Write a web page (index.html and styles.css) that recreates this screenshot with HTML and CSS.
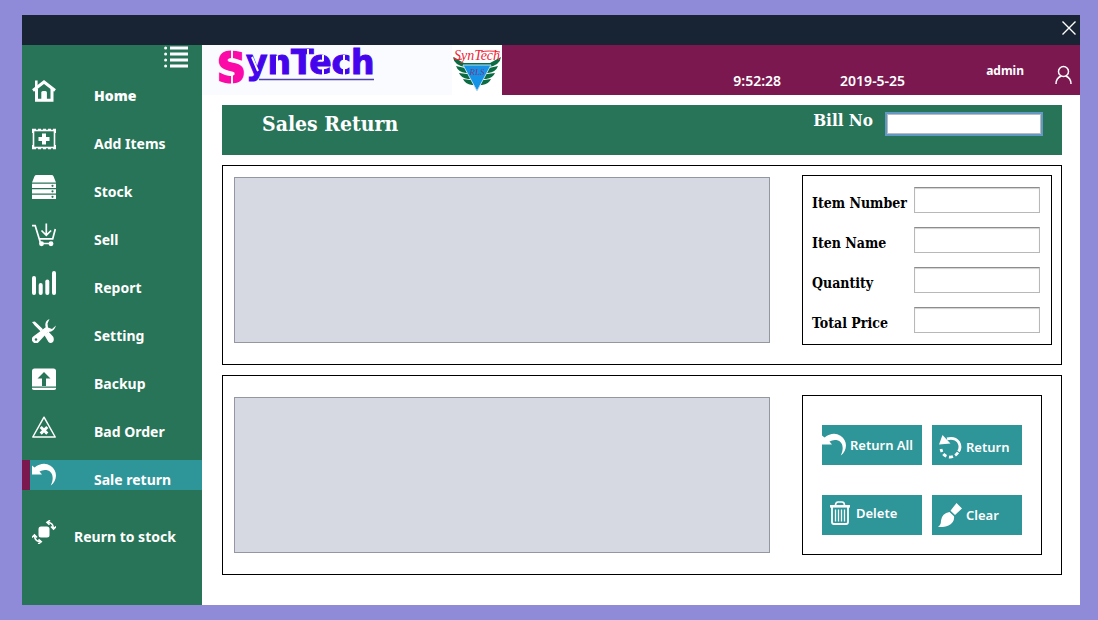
FILE: index.html
```html
<!DOCTYPE html>
<html lang="en">
<head>
    <meta charset="UTF-8">
    <meta name="viewport" content="width=device-width, initial-scale=1.0">
    <title>Sales Return</title>
    <link rel="stylesheet" href="styles.css">
</head>
<body>
    <div class="window">
        <div class="titlebar">
            <button type="button" class="icon-btn" aria-label="Close">
                <svg width="14" height="14" viewBox="0 0 14 14" fill="none" stroke="#fff" stroke-width="1.4"><path d="M.5.5l13 13M13.5.5l-13 13"/></svg>
            </button>
        </div>

        <div class="layout">
            <nav class="sidebar">
                <button type="button" class="icon-btn menu-btn" aria-label="Menu">
                    <svg width="24" height="24" viewBox="0 0 24 24" fill="#fff"><path d="M6 1.5h18v3H6zM6 7.500h18v3H6zM6 13.500h18v3H6zM6 19.500h18v3H6z"/><circle cx="1.600" cy="3" r="1.500"/><circle cx="1.600" cy="9" r="1.500"/><circle cx="1.600" cy="15" r="1.500"/><circle cx="1.600" cy="21" r="1.500"/></svg>
                </button>
                <a href="#" class="nav-item nav-home">
                    <svg viewBox="0 0 24 24" fill="none" stroke="#fff"><path d="M1 11.500L12 3l11 8.500" stroke-width="3"/><path d="M4.500 10v11.300h15.500V10" stroke-width="3"/><path d="M4.300 9V1.500" stroke-width="2.600"/><path d="M9.300 21v-7.500q0-1.500 1.500-1.500h2.600q1.500 0 1.500 1.500V21z" fill="#fff" stroke="none"/></svg>
                    <span>Home</span>
                </a>
                <a href="#" class="nav-item">
                    <svg viewBox="0 0 24 24" fill="none" stroke="#fff"><rect x="1.500" y="3.500" width="21" height="17" stroke-width="1.600"/><path d="M0 2.500h4M6 2.500h3M11 2.500h3M16 2.500h3M21 2.500h3M0 21.500h4M6 21.500h3M11 21.500h3M16 21.500h3M21 21.500h3" stroke-width="1.300"/><path d="M.7 2v4M.7 18v4M23.300 2v4M23.300 18v4" stroke-width="1.400"/><path d="M12 6.500v11M6.500 12h11" stroke-width="4"/></svg>
                    <span>Add Items</span>
                </a>
                <a href="#" class="nav-item">
                    <svg viewBox="0 0 24 24" fill="#fff"><path d="M4.500 0h15q1.500 0 2 1.200L24 7.500H0L2.500 1.200Q3 0 4.500 0zM0 8.700h24v4.200H0zM0 14.200h24v4.200H0zM0 19.700h24V24H0z"/><g fill="#277458"><circle cx="20.500" cy="10.800" r="1.100"/><circle cx="20.500" cy="16.300" r="1.100"/><circle cx="20.500" cy="21.800" r="1.100"/></g></svg>
                    <span>Stock</span>
                </a>
                <a href="#" class="nav-item">
                    <svg viewBox="0 0 24 24" fill="none" stroke="#fff" stroke-width="1.700"><path d="M0 2.700h3.200L8.500 20M7.500 15.800h13.200l2.600-9.800M9 20.500h10"/><path d="M14.300.5v11M9.500 7.500l4.800 4.800 4.800-4.800"/><circle cx="9.500" cy="20.700" r="1.600" fill="#fff"/><circle cx="19" cy="20.700" r="1.600" fill="#fff"/></svg>
                    <span>Sell</span>
                </a>
                <a href="#" class="nav-item">
                    <svg viewBox="0 0 24 24" fill="#fff"><rect y="5" width="4" height="19" rx="2"/><rect x="6.700" y="12" width="4" height="12" rx="2"/><rect x="13.300" y="8.500" width="4" height="15.500" rx="2"/><rect x="20" width="4" height="24" rx="2"/></svg>
                    <span>Report</span>
                </a>
                <a href="#" class="nav-item">
                    <svg viewBox="0 0 24 24" fill="#fff"><path d="M17.500 0Q12 2.500 13.700 8.200L1.200 17.500a3.800 3.800 0 0 0 5.300 5.700L16 13q6 .4 8-6.500L20 10l-4-1.500-.5-4z"/><path d="M0 3l2.800-.4 2.200 2 6 5.600-2.300 2.300L2.500 6.300zM12.300 16l4.100-3.500 4.800 5.300q1.300 3-.2 5.200-2.500 1.800-4.500 0z"/><circle cx="4" cy="20.500" r="1.200" fill="#277458"/></svg>
                    <span>Setting</span>
                </a>
                <a href="#" class="nav-item">
                    <svg viewBox="0 0 24 24" fill="#fff"><path d="M2.500 1.500h19Q24 1.500 24 4v15.500H0V4q0-2.500 2.500-2.500z"/><path d="M0 20.800h24v.7q0 1.500-2.500 1.500h-19Q0 23 0 21.500z"/><path d="M12 5l6.500 6.500H14v7.500h-4v-7.500H5.500z" fill="#277458"/></svg>
                    <span>Backup</span>
                </a>
                <a href="#" class="nav-item">
                    <svg viewBox="0 0 24 24" fill="none" stroke="#fff"><path d="M12 2.200L23.200 22H.8z" stroke-width="1.500" stroke-linejoin="round"/><path d="M8.700 12l6.600 6.600M15.300 12l-6.600 6.600" stroke-width="3"/></svg>
                    <span>Bad Order</span>
                </a>
                <a href="#" class="nav-item active">
                    <svg viewBox="0 0 24 24" fill="#fff"><path d="M0 2.500L2.500 4.500Q11-1.800 18.500 2.700C26 7.500 25.500 17.500 18.800 22.500 22 16 21.500 8.500 14.500 7Q10.500 6.500 7.500 8.500L10 11.500H0z"/></svg>
                    <span>Sale return</span>
                </a>
                <a href="#" class="nav-item nav-last">
                    <svg viewBox="0 0 24 24" fill="none" stroke="#fff" stroke-width="1.600"><rect x="6.500" y="6.500" width="11" height="11" rx="2.500" fill="#fff" stroke="none"/><path d="M15 2.200q6 0 6.500 6M18 .3l-3 2 2.500 2.500M19 6.500l2.500 2.500L24 6.500M9 21.800q-6 0-6.500-6M6.500 19.300l2.700 2.500-3 2.200M0 17.500L2.500 15 5 17.500"/></svg>
                    <span>Reurn to stock</span>
                </a>
            </nav>

            <main class="main">
                <header class="header">
                    <div class="brand">
                        <svg class="logo" width="170" height="50" viewBox="0 0 170 50" role="img" aria-label="SynTech">
                            <text x="-1" y="37" class="logo-s">S</text>
                            <text x="28" y="29" class="logo-rest">ynTech</text>
                            <!-- stencil cuts -->
                            <path d="M14 4v13M14 27v12M34 12l6 14M59 11v20M90 4v7M105 10v6M105 22v9M126 10v7M126 22v9" stroke="#fafbff" stroke-width="2"/>
                            <path d="M41 34.500h115" stroke="#4d45a0" stroke-width="1.500"/>
                        </svg>
                        <svg class="emblem" width="50" height="50" viewBox="0 0 50 50" role="img" aria-label="SynTech RLS">
                            <g fill="#0b6b42"><path d="M1 12l11 6h13v4H13Q2 20 1 12z"/><path d="M4 21l9 2h12v5H14Q6 27 4 21z"/><path d="M7 28l8 1h10v5h-9Q9 33 7 28z"/><path d="M11 34l7 1h7v5h-5Q13 39 11 34z"/>
                            <path d="M49 12l-11 6H25v4h12q11-2 12-10z"/><path d="M46 21l-9 2H25v5h11q8-1 10-7z"/><path d="M43 28l-8 1H25v5h9q7-1 9-6z"/><path d="M39 34l-7 1h-7v5h5q7-1 9-6z"/></g>
                            <path d="M11 20h28L25 46z" fill="#1593e6" stroke="#b9dcf0" stroke-width="1"/>
                            <text x="25" y="30" text-anchor="middle" class="emblem-inner">RLS</text>
                            <text x="25" y="15" text-anchor="middle" class="emblem-name">SynTech</text>
                            <path d="M2 13q4 3 8 1M29 7q7-2 19 0" stroke="#ed2636" fill="none"/>
                        </svg>
                    </div>
                    <div class="status">
                        <time class="clock">9:52:28</time>
                        <time class="date" datetime="2019-05-25">2019-5-25</time>
                        <span class="user">admin</span>
                        <button type="button" class="icon-btn" aria-label="Account">
                            <svg width="17" height="20" viewBox="0 0 17 20" fill="none" stroke="#fff" stroke-width="1.500"><circle cx="8.500" cy="6.500" r="5"/><path d="M1 19q0-6 5.300-8M16 19q0-6-5.300-8"/></svg>
                        </button>
                    </div>
                </header>

                <div class="content">
                    <div class="banner">
                        <h1>Sales Return</h1>
                        <label for="billNo">Bill No</label>
                        <input type="text" id="billNo" class="bill-input">
                    </div>

                    <section class="panel">
                        <div class="table-area"></div>
                        <form class="box item-form">
                            <label for="itemNumber">Item Number</label>
                            <input type="text" id="itemNumber">
                            <label for="itemName">Iten Name</label>
                            <input type="text" id="itemName">
                            <label for="quantity">Quantity</label>
                            <input type="text" id="quantity">
                            <label for="totalPrice">Total Price</label>
                            <input type="text" id="totalPrice">
                        </form>
                    </section>

                    <section class="panel panel-actions">
                        <div class="table-area"></div>
                        <div class="box actions">
                            <button type="button" class="action-btn flush">
                                <svg width="24" height="24" viewBox="0 0 24 24" fill="#fff"><path d="M0 2.500L2.500 4.500Q11-1.800 18.500 2.700C26 7.500 25.500 17.500 18.800 22.500 22 16 21.500 8.500 14.500 7Q10.500 6.500 7.500 8.500L10 11.500H0z"/></svg>
                                Return All
                            </button>
                            <button type="button" class="action-btn low">
                                <svg width="24" height="24" viewBox="0 0 24 24" fill="none" stroke="#fff" stroke-width="2.800"><path d="M9 3.800Q17 2 20.500 7q3 5 0 9.500"/><path d="M20 17.500q-3.500 5-9 4.500-6.500-1-8-8" stroke-dasharray="4 2.500"/><path d="M4.500 0L1 9.500l11.500-1z" fill="#fff" stroke="none"/></svg>
                                Return
                            </button>
                            <button type="button" class="action-btn high">
                                <svg width="24" height="24" viewBox="0 0 24 24" fill="none" stroke="#fff"><path d="M2 5.300h20" stroke-width="2.600"/><path d="M7.500 4.500Q7.500 1 10 1h4q2.500 0 2.500 3.500" stroke-width="1.600"/><path d="M4 6v15q0 2 2 2h12q2 0 2-2V6" stroke-width="1.800"/><path d="M7.500 8.500v12M10.500 8.500v12M13.500 8.500v12M16.500 8.500v12" stroke-width="1.300"/></svg>
                                Delete
                            </button>
                            <button type="button" class="action-btn">
                                <svg width="24" height="24" viewBox="0 0 24 24" fill="#fff"><path d="M18.500 0L24 5.500 17 12l-4.500-4.300z"/><path d="M11.500 9l4.500 4.200Q17 19 10.500 22.500 6 24.500 0 24q3-2 3-6.500Q4 10 11.500 9z"/></svg>
                                Clear
                            </button>
                        </div>
                    </section>
                </div>
            </main>
        </div>
    </div>
</body>
</html>
```

FILE: styles.css
```css
* {
    box-sizing: border-box;
}
body {
    font-family: "Noto Sans", "Open Sans", sans-serif;
    font-weight: 600;
    margin: 0;
    padding: 15px 18px 15px 22px;
    background-color: #8f8bd8;
    display: flex;
    min-height: 100vh;
}
.window {
    flex: 1;
    display: flex;
    flex-direction: column;
    background: white;
}
.titlebar {
    height: 30px;
    padding-right: 4px;
    background-color: #182434;
    display: flex;
    align-items: center;
    justify-content: flex-end;
}
.icon-btn {
    display: flex;
    padding: 0;
    background: none;
    border: none;
    cursor: pointer;
}
.titlebar .icon-btn {
    margin-top: -4px;
}
.layout {
    flex: 1;
    display: flex;
}

/* sidebar */
.sidebar {
    width: 180px;
    background-color: #277458;
    display: flex;
    flex-direction: column;
    gap: 18px;
}
.menu-btn {
    align-self: flex-end;
    margin: 0 14px -11px 0;
}
.nav-item {
    height: 30px;
    padding-left: 2px;
    border-left: 8px solid transparent;
    display: flex;
    align-items: center;
    gap: 38px;
    color: white;
    font-size: 14px;
    font-weight: bold;
    line-height: 20px;
    text-decoration: none;
}
.nav-item svg {
    width: 24px;
    height: 24px;
}
.nav-item span {
    align-self: flex-end;
}
.nav-home {
    font-weight: 900;
}
.nav-item.active {
    background-color: #2e9599;
    background-clip: padding-box;
    border-left-color: #7a184f;
}
.nav-last {
    gap: 18px;
    margin-top: 9px;
}

/* header */
.main {
    flex: 1;
    display: flex;
    flex-direction: column;
}
.header {
    height: 50px;
    display: flex;
    background-color: #7a184f;
}
.brand {
    width: 300px;
    background: #fafbff;
    display: flex;
    justify-content: space-between;
    padding-left: 16px;
}
.logo {
    overflow: visible;
}
.logo-s {
    font: bold 40px "DejaVu Sans", sans-serif;
    fill: #fb0aa8;
    stroke: #fb0aa8;
    stroke-width: 2px;
}
.logo-rest {
    font: bold 33px "DejaVu Sans", sans-serif;
    fill: #4505ec;
    stroke: #4505ec;
    stroke-width: 1px;
}
.emblem {
    background: white;
}
.emblem-name {
    font: italic 14px "Liberation Serif", serif;
    fill: #ed2636;
}
.emblem-inner {
    font: italic 9px "Liberation Serif", serif;
    fill: #7b3a8c;
}
.status {
    flex: 1;
    display: flex;
    justify-content: flex-end;
    padding: 16px 8px 0 0;
    color: white;
    font-size: 14px;
    font-weight: 600;
    line-height: 20px;
}
.status .icon-btn {
    align-self: flex-start;
    margin: 4px 0 0 31px;
}
.clock,
.date {
    padding-top: 10px;
}
.date {
    margin: 0 81px 0 59px;
}
.user {
    font-size: 12px;
    font-weight: bold;
}

/* content */
.content {
    padding: 10px 18px 30px 20px;
    display: flex;
    flex-direction: column;
    gap: 10px;
}
.banner {
    height: 50px;
    padding: 5px 19px 0 40px;
    background-color: #277458;
    color: white;
    display: flex;
    align-items: flex-start;
    font-family: "DejaVu Serif Condensed", "DejaVu Serif", serif;
    font-weight: bold;
}
.banner h1 {
    flex: 1;
    margin: 0;
    font-size: 21px;
    line-height: 28px;
}
.banner label {
    font-size: 17px;
    line-height: 20px;
    margin-right: 12px;
}
input {
    width: 100%;
    height: 26px;
    padding: 2px 5px;
    font-size: 13px;
    background: white;
    border: 1px solid #b8b8b8;
    border-top-color: #8c8c8c;
    box-shadow: inset 0 1px 1px #d0d0d0;
}
.banner .bill-input {
    width: 158px;
    height: 24px;
    margin-top: 2px;
    border: 2px solid #6299c4;
    box-shadow: inset 0 0 0 1px #bbb;
}
.panel {
    min-height: 200px;
    padding: 9px 9px 19px 11px;
    border: 1px solid black;
    display: flex;
    gap: 32px;
}
.table-area {
    flex: 1;
    margin: 2px 0;
    background-color: #d6d9e1;
    border: 1px solid #9297a1;
}
.box {
    border: 1px solid black;
}
.item-form {
    width: 250px;
    padding: 11px 11px 11px 9px;
    display: grid;
    grid-template-columns: 1fr 126px;
    row-gap: 14px;
    font-family: "DejaVu Serif Condensed", "DejaVu Serif", serif;
    font-weight: bold;
    font-size: 14px;
    line-height: 20px;
}
.item-form label {
    padding-top: 6px;
    white-space: nowrap;
}
.panel-actions {
    padding: 19px 19px 19px 11px;
}
.actions {
    width: 240px;
    padding: 29px 19px 19px;
    display: grid;
    grid-template-columns: 100px 90px;
    grid-auto-rows: 40px;
    gap: 30px 10px;
}
.action-btn {
    display: flex;
    align-items: center;
    gap: 4px;
    padding: 0 0 0 6px;
    background-color: #2e9599;
    color: white;
    border: none;
    font: inherit;
    font-size: 13px;
    line-height: 20px;
    white-space: nowrap;
    cursor: pointer;
}
.action-btn.flush {
    padding-left: 0;
}
.action-btn.low {
    padding-top: 4px;
}
.action-btn.high {
    padding-bottom: 4px;
}
.action-btn:hover {
    background-color: #27858a;
}
```
